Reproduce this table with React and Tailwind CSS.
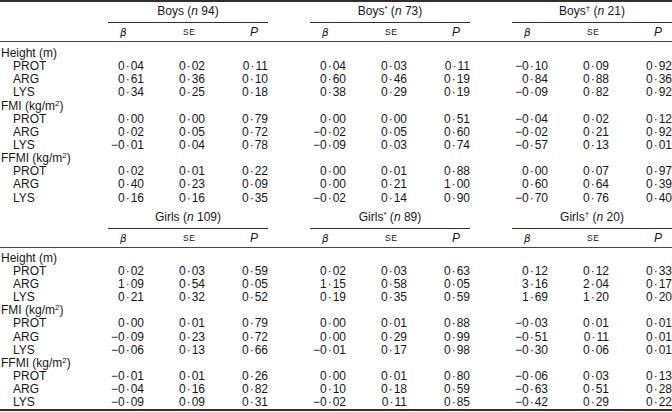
import React from 'react';

const blocks = [
  {
    groups: [
      { name: 'Boys', mark: '', n: '94' },
      { name: 'Boys', mark: '*', n: '73' },
      { name: 'Boys', mark: '†', n: '21' },
    ],
    sections: [
      {
        label: 'Height (m)',
        rows: [
          ['PROT', '0·04', '0·02', '0·11', '0·04', '0·03', '0·11', '−0·10', '0·09', '0·92'],
          ['ARG', '0·61', '0·36', '0·10', '0·60', '0·46', '0·19', '0·84', '0·88', '0·36'],
          ['LYS', '0·34', '0·25', '0·18', '0·38', '0·29', '0·19', '−0·09', '0·82', '0·92'],
        ],
      },
      {
        label: 'FMI (kg/m',
        sup: true,
        rows: [
          ['PROT', '0·00', '0·00', '0·79', '0·00', '0·00', '0·51', '−0·04', '0·02', '0·12'],
          ['ARG', '0·02', '0·05', '0·72', '−0·02', '0·05', '0·60', '−0·02', '0·21', '0·92'],
          ['LYS', '−0·01', '0·04', '0·78', '−0·09', '0·03', '0·74', '−0·57', '0·13', '0·01'],
        ],
      },
      {
        label: 'FFMI (kg/m',
        sup: true,
        rows: [
          ['PROT', '0·02', '0·01', '0·22', '0·00', '0·01', '0·88', '0·00', '0·07', '0·97'],
          ['ARG', '0·40', '0·23', '0·09', '0·00', '0·21', '1·00', '0·60', '0·64', '0·39'],
          ['LYS', '0·16', '0·16', '0·35', '−0·02', '0·14', '0·90', '−0·70', '0·76', '0·40'],
        ],
      },
    ],
  },
  {
    groups: [
      { name: 'Girls', mark: '', n: '109' },
      { name: 'Girls', mark: '*', n: '89' },
      { name: 'Girls', mark: '†', n: '20' },
    ],
    sections: [
      {
        label: 'Height (m)',
        rows: [
          ['PROT', '0·02', '0·03', '0·59', '0·02', '0·03', '0·63', '0·12', '0·12', '0·33'],
          ['ARG', '1·09', '0·54', '0·05', '1·15', '0·58', '0·05', '3·16', '2·04', '0·17'],
          ['LYS', '0·21', '0·32', '0·52', '0·19', '0·35', '0·59', '1·69', '1·20', '0·20'],
        ],
      },
      {
        label: 'FMI (kg/m',
        sup: true,
        rows: [
          ['PROT', '0·00', '0·01', '0·79', '0·00', '0·01', '0·88', '−0·03', '0·01', '0·01'],
          ['ARG', '−0·09', '0·23', '0·72', '0·00', '0·29', '0·99', '−0·51', '0·11', '0·01'],
          ['LYS', '−0·06', '0·13', '0·66', '−0·01', '0·17', '0·98', '−0·30', '0·06', '0·01'],
        ],
      },
      {
        label: 'FFMI (kg/m',
        sup: true,
        rows: [
          ['PROT', '−0·01', '0·01', '0·26', '0·00', '0·01', '0·80', '−0·06', '0·03', '0·13'],
          ['ARG', '−0·04', '0·16', '0·82', '0·10', '0·18', '0·59', '−0·63', '0·51', '0·28'],
          ['LYS', '−0·09', '0·09', '0·31', '−0·02', '0·11', '0·85', '−0·42', '0·29', '0·22'],
        ],
      },
    ],
  },
];

// number with a spaced middle dot as decimal mark
function Num({ v }) {
  const [a, b] = v.split('·');
  return (
    <span>
      {a}
      <span className="mx-[1px]">·</span>
      {b}
    </span>
  );
}

function Block({ block, first }) {
  return (
    <div className={first ? 'border-t-2 border-[#2e2e2e] pt-[2px]' : 'pt-[5px]'}>
      {/* group titles */}
      <div className="flex">
        <div className="w-[108px] shrink-0" />
        <div className="flex gap-[42px]">
          {block.groups.map((g, i) => (
            <div key={i} className="w-[160px] h-[19px] text-center border-b border-[#2e2e2e] leading-[15px]">
              {g.name}
              {g.mark && <span className="text-[8px] leading-none relative top-[-4px]">{g.mark}</span>} (<i>n</i> {g.n})
            </div>
          ))}
        </div>
      </div>
      {/* column heads */}
      <div className="flex border-b border-[#444]">
        <div className="w-[108px] shrink-0" />
        <div className="flex gap-[42px]">
          {block.groups.map((g, i) => (
            <div key={i} className="w-[160px] h-[18px] grid grid-cols-[36px_61px_63px] leading-[18px]">
              <div className="pl-[12px]" style={{ fontFamily: '"DejaVu Sans", sans-serif' }}>
                <i className="text-[10.5px]">β</i>
              </div>
              <div className="pl-[39px] text-[8.5px] tracking-[0.5px]">SE</div>
              <div className="pl-[45px]">
                <i>P</i>
              </div>
            </div>
          ))}
        </div>
      </div>
      {/* data */}
      <div className={first ? 'pt-[5px]' : 'pt-[4px]'}>
        {block.sections.map((s, si) => (
          <div key={si}>
            <div className="h-[13.15px] leading-[13.15px] pl-[1px]">
              {s.label}
              {s.sup && <sup className="text-[8px]">2</sup>}
              {s.sup && ')'}
            </div>
            {s.rows.map((r, ri) => (
              <div key={ri} className="flex h-[13.15px] leading-[13.15px]">
                <div className="w-[108px] shrink-0 pl-[13px]">{r[0]}</div>
                <div className="flex gap-[42px]">
                  {[0, 1, 2].map((gi) => (
                    <div key={gi} className="w-[160px] grid grid-cols-[36px_61px_63px] text-right">
                      <div>
                        <Num v={r[1 + gi * 3]} />
                      </div>
                      <div>
                        <Num v={r[2 + gi * 3]} />
                      </div>
                      <div>
                        <Num v={r[3 + gi * 3]} />
                      </div>
                    </div>
                  ))}
                </div>
              </div>
            ))}
          </div>
        ))}
      </div>
    </div>
  );
}

export default function App() {
  return (
    <div
      className="w-[672px] h-[412px] bg-white text-[#161616] text-[12px] overflow-hidden"
      style={{ fontFamily: '"Liberation Sans", Arial, sans-serif' }}
    >
      <Block block={blocks[0]} first />
      <div className="border-b-2 border-[#2e2e2e]">
        <Block block={blocks[1]} />
      </div>
    </div>
  );
}
